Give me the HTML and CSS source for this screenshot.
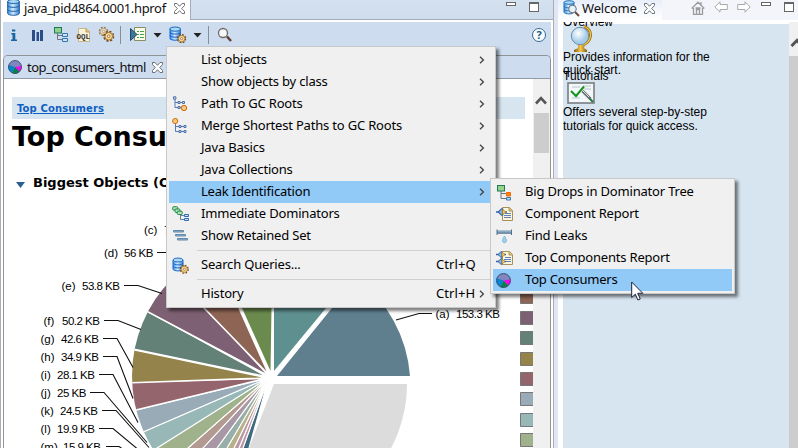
FILE: index.html
```html
<!DOCTYPE html>
<html lang="en">
<head>
<meta charset="utf-8">
<title>Memory Analyzer</title>
<link rel="stylesheet" href="styles.css">
</head>
<body>
<svg width="0" height="0" class="defs">
  <defs>
    <linearGradient id="dbg" x1="0" x2="1"><stop offset="0" stop-color="#3f8fd9"/><stop offset=".45" stop-color="#d0ecfc"/><stop offset="1" stop-color="#3b82cd"/></linearGradient>
    <linearGradient id="gold" x1="0" x2="1"><stop offset="0" stop-color="#8a5a14"/><stop offset=".5" stop-color="#f6c94c"/><stop offset="1" stop-color="#8a5a14"/></linearGradient>
    <radialGradient id="glass" cx=".4" cy=".35"><stop offset="0" stop-color="#fff"/><stop offset="1" stop-color="#a4cbe8"/></radialGradient>
    <symbol id="db" viewBox="0 0 13 17">
      <path d="M.7 2.5V14.200C.7 17 12.300 17 12.300 14.200V2.500Z" fill="url(#dbg)" stroke="#1d5ba5"/>
      <ellipse cx="6.500" cy="2.500" rx="5.800" ry="2" fill="#a9d7f6" stroke="#1d5ba5"/>
      <path d="M.7 6.500C.7 9 12.300 9 12.300 6.500M.7 10.500C.7 13 12.300 13 12.300 10.500" fill="none" stroke="#1d5ba5"/>
    </symbol>
    <symbol id="gear" viewBox="0 0 10 10">
      <circle cx="5" cy="5" r="4.200" fill="none" stroke="#7b4b14" stroke-width="1.300" stroke-dasharray="1.900 1.400"/>
      <circle cx="5" cy="5" r="3.300" fill="#fbdf9a" stroke="#9a6725" stroke-width=".8"/>
      <circle cx="5" cy="5" r="1.200" fill="#fff" stroke="#8a571b" stroke-width=".7"/>
    </symbol>
    <symbol id="dbgear" viewBox="0 0 17 17">
      <path d="M1 3V12C1 14.500 11 14.500 11 12V3Z" fill="url(#dbg)" stroke="#1c66d0"/>
      <ellipse cx="6" cy="3" rx="5" ry="2" fill="#a9d7f6" stroke="#2471bd"/>
      <path d="M1 6C1 8.500 11 8.500 11 6M1 9C1 11.500 11 11.500 11 9" fill="none" stroke="#1c66d0"/>
      <use href="#gear" x="7.500" y="7.500" width="9.500" height="9.500"/>
    </symbol>
    <symbol id="close" viewBox="0 0 11 11">
      <path d="M.5.5H3L5.500 3.300 8 .5H10.500V2.500L7.700 5.500 10.500 8.500V10.500H8L5.500 7.700 3 10.500H.5V8.500L3.300 5.500.5 2.500Z" fill="#fff" stroke="#606468" stroke-width=".9"/>
    </symbol>
    <symbol id="pieicon" viewBox="0 0 14 14">
      <circle cx="7" cy="7" r="6.500" fill="#8385c1"/>
      <path d="M7 7L13.500 6A6.500 6.500 0 0 1 11.500 11.700Z" fill="#f0e"/>
      <path d="M7 7L11.500 11.700A6.500 6.500 0 0 1 4 12.800Z" fill="#0a7f4a"/>
      <path d="M7 7L4 12.800A6.500 6.500 0 0 1 .8 5Z" fill="#0784d1"/>
      <circle cx="7" cy="7" r="6.500" fill="none" stroke="#35506e" stroke-width=".9"/>
    </symbol>
    <symbol id="domtree" viewBox="0 0 15 15">
      <path d="M4 6V12.500H9M4 8.500H9" fill="none" stroke="#6b747c"/>
      <rect x="1" y=".5" width="7" height="5.500" fill="#8fd090" stroke="#1f7a50"/>
    </symbol>
    <symbol id="page" viewBox="0 0 16 16">
      <path d="M5.500 1.500H12.500L15.500 4.500V14.500H5.500Z" fill="#fbf5dc" stroke="#a9905a"/>
      <path d="M12 1.500V5H15.500" fill="#e5cc86" stroke="#a9905a"/>
      <path d="M8 7.500H14M7 9.500H14M7 11.500H14" stroke="#5f83be"/>
    </symbol>
    <symbol id="plug" viewBox="0 0 10 7">
      <path d="M0 3.500H3M8 3.500H10" stroke="#3567a8" stroke-width="1.300"/>
      <path d="M2 3.500L5 .7H6V6.300H5Z" fill="#8cb2df" stroke="#3567a8"/>
      <path d="M6 1L9 3.500 6 6Z" fill="#f7d36b" stroke="#9c7423" stroke-width=".7"/>
    </symbol>
    <symbol id="chev" viewBox="0 0 6 8"><path d="M1 .8L4.400 4 1 7.200" fill="none" stroke="#444" stroke-width="1.300"/></symbol>
    <symbol id="arrow" viewBox="0 0 14 12"><path d="M.8 6L6 .8V3.500H13.300V8.500H6V11.200Z" fill="#fff" stroke="#a9a9a9"/></symbol>
  </defs>
</svg>

<div class="workbench">
  <section class="editor">
    <div class="tabs">
      <div class="tab">
        <svg class="tab-db" width="13" height="17"><use href="#db"/></svg>
        <span class="name file-name">java_pid4864.0001.hprof</span>
        <svg class="x" width="11" height="11"><use href="#close"/></svg>
      </div>
      <div class="window-buttons"><i class="min"></i><i class="max"></i></div>
    </div>
    <div class="editor-body">
      <div class="toolbar">
        <svg width="520" height="33" viewBox="3 22 520 33">
          <path d="M12 29.500h3.300v2H12zM11.300 33h4v6.500H17V41h-6v-1.500h1.500v-5h-1.200z" fill="#1765a3"/>
          <path d="M32 30h3v11h-3zM36.500 32h2.500v9h-2.500zM40 30h3v11h-3z" fill="#284f88"/>
          <use href="#domtree" x="53.500" y="27" width="15" height="15"/>
          <path d="M62.500 33.500h5v3h-5zM62.500 38.500h5v3h-5z" fill="#c9e4f6" stroke="#3975ad"/>
          <path d="M78.500 28.500h8l3 3v10h-11z" fill="#faf2d9" stroke="#c9b78c"/>
          <path d="M86 28.500v3.500h3.500" fill="#e7c870" stroke="#b89a56"/>
          <text x="76.500" y="39" class="oql" textLength="13.500" lengthAdjust="spacingAndGlyphs">OQL</text>
          <use href="#gear" x="98.500" y="26.500" width="10" height="10" opacity=".65"/>
          <use href="#gear" x="103" y="30.500" width="11.500" height="11.500"/>
          <path d="M120.500 26V44M208.500 26V44" stroke="#858e99"/>
          <path d="M134.500 27.500h11v13h-11z" fill="#f8fbe9" stroke="#8b8d60"/>
          <path d="M137 31.500h2M140 31.500h4M137 34.500h2M140 34.500h4M137 37.500h2M140 37.500h4" stroke="#49a04c"/>
          <path d="M130.500 28.500v12l6.500-6z" fill="#3c7795" stroke="#1b4c70"/>
          <path d="M153.500 33h8l-4 4.500zM193.500 33h8l-4 4.500z" fill="#222"/>
          <use href="#dbgear" x="169" y="26" width="17.500" height="17.500"/>
          <path d="M227 36.500l4 4.500" stroke="#5d3f33" stroke-width="2.500"/>
          <circle cx="223" cy="33" r="4.500" fill="#f3f8fb" stroke="#756b62" stroke-width="1.300"/>
        </svg>
        <span class="help">?</span>
      </div>
      <div class="query">
        <div class="query-tabs">
          <svg width="14" height="14"><use href="#pieicon"/></svg>
          <span class="name query-name">top_consumers_html</span>
          <svg class="x" width="11" height="11"><use href="#close"/></svg>
        </div>
        <div class="query-body">
          <div class="report">
            <div class="crumb"><a>Top Consumers</a></div>
            <h1>Top Consumers</h1>
            <h2><i class="twisty"></i>Biggest Objects (Overview)</h2>
            <svg class="chart" width="529" height="248" viewBox="4 200 529 248">
              <defs><clipPath id="disc"><circle cx="270" cy="376" r="138"/></clipPath></defs>
              <g clip-path="url(#disc)" stroke="#fff" stroke-width="1.100">
                <path d="M269 377L249 448 200 560 243 448Z" fill="#3f6a80"/>
                <path d="M268 378L243 448 200 520 239 448Z" fill="#bc98a4"/>
                <path d="M268 378L239 448 180 530 234 448Z" fill="#bc98a4"/>
                <path d="M268 378L234 448 180 530 227 448Z" fill="#b8b088"/>
                <path d="M268 378L227 448 150 560 217 448Z" fill="#98aea8"/>
                <path d="M268 378L217 448 150 530 203 448Z" fill="#a898a5"/>
                <path d="M268 378L203 448 140 500 188 448Z" fill="#b29a90"/>
                <path d="M268 378L188 448 120 500 157 448Z" fill="#a0b28b"/>
                <path d="M268 378L157 448 100 480 143 432Z" fill="#98b8b7"/>
                <path d="M268 378L143 432 80 450 136 410Z" fill="#98abb7"/>
              </g>
              <g clip-path="url(#disc)" stroke="#fff" stroke-width="1.600">
                <path d="M268 378L136 410 80 420 132 382Z" fill="#95656d"/>
                <path d="M268 378L80 384.500V339L135 350Z" fill="#94834b"/>
                <path d="M268 377L80 338V276L149 312Z" fill="#648177"/>
                <path d="M269 376L90 281 110 210 206 308Z" fill="#7d6073"/>
                <path d="M269 375L110 211 200 220 239 308Z" fill="#8e6555"/>
              </g>
              <path d="M270.500 371L242 308 224 268V248H271.500V308Z" fill="#6b8a4d"/>
              <path d="M274 371V248H360L326 308Z" fill="#5f9090"/>
              <path d="M277 376L332 308 356 277A137 137 0 0 1 410 376Z" fill="#5f7f8f"/>
              <circle cx="270" cy="378" r="5" fill="#fff"/>
              <path d="M274 384H407A136 136 0 0 1 374 473L230 490 249 448Z" fill="#dcdcdc"/>
              <path d="M124 285.500h14l24 8M104 320.500h14l23 9M103 338.500h14l16 29M103 356.500h14l16 42M99 374.500h14l25 48M90 392.500h14l43 50M102 410.500h14l33 37M99 428.500h14l24 20M106 446.500h13l6 4M157 252.500h14M396 320l23-6.500h13" fill="none" stroke="#111" stroke-width="1.100"/>
              <g class="labels">
                <text x="144" y="234">(c)</text><text class="val" x="164" y="234">79.1 KB</text>
                <text x="104" y="257">(d)</text><text class="val" x="124" y="257">56 KB</text>
                <text x="61.500" y="290">(e)</text><text class="val" x="82" y="290">53.8 KB</text>
                <text x="43.500" y="325">(f)</text><text class="val" x="62" y="325">50.2 KB</text>
                <text x="40.500" y="343">(g)</text><text class="val" x="61" y="343">42.6 KB</text>
                <text x="40.500" y="361">(h)</text><text class="val" x="61" y="361">34.9 KB</text>
                <text x="40.500" y="379">(i)</text><text class="val" x="57" y="379">28.1 KB</text>
                <text x="40.500" y="397">(j)</text><text class="val" x="57" y="397">25 KB</text>
                <text x="40.500" y="415">(k)</text><text class="val" x="60" y="415">24.5 KB</text>
                <text x="40.500" y="433">(l)</text><text class="val" x="57" y="433">19.9 KB</text>
                <text x="40.500" y="451">(m)</text><text class="val" x="63" y="451">15.9 KB</text>
                <text x="435.500" y="318">(a)</text><text class="val" x="456" y="318">153.3 KB</text>
              </g>
              <g stroke="#777" >
                <path d="M520.500 290.500h13v13h-13z" fill="#8e6555"/>
                <path d="M520.500 311.500h13v13h-13z" fill="#7d6073"/>
                <path d="M520.500 331.500h13v13h-13z" fill="#648177"/>
                <path d="M520.500 352.500h13v13h-13z" fill="#94834b"/>
                <path d="M520.500 372.500h13v13h-13z" fill="#95656d"/>
                <path d="M520.500 392.500h13v13h-13z" fill="#98abb7"/>
                <path d="M520.500 413.500h13v13h-13z" fill="#98b8b7"/>
                <path d="M520.500 433.500h13v13h-13z" fill="#a0b28b"/>
              </g>
            </svg>
          </div>
          <div class="scroll">
            <svg width="12" height="10" viewBox="0 0 12 10"><path d="M1 8.500L6 3.200 11 8.500" fill="none" stroke="#555" stroke-width="2.600"/></svg>
            <i class="thumb"></i>
          </div>
        </div>
      </div>
    </div>
  </section>

  <section class="welcome">
    <div class="wtabs">
      <div class="wtab">
        <svg width="17" height="17" viewBox="0 0 17 17">
          <path d="M1 2V12C1 14.500 11 14.500 11 12V2Z" fill="url(#dbg)" stroke="#2471bd"/>
          <ellipse cx="6" cy="2.500" rx="5" ry="1.800" fill="#a9d7f6" stroke="#2471bd"/>
          <path d="M1 6C1 8.500 11 8.500 11 6M1 9C1 11.500 11 11.500 11 9" fill="none" stroke="#2471bd"/>
          <path d="M12 12l4 4" stroke="#6d4a3a" stroke-width="2"/>
          <circle cx="9.500" cy="9" r="3.800" fill="#e3f2fb" stroke="#6e7074"/>
        </svg>
        <span class="name welcome-name">Welcome</span>
        <svg class="x" width="11" height="11"><use href="#close"/></svg>
      </div>
      <div class="wtools">
        <svg width="14" height="14" viewBox="0 0 14 14"><path d="M2.500 7V13.500H11.500V7M.7 7.500L7 1.200 13.300 7.500M10 1v3M5.500 13.500V8.500h3v5M4.500 7h5" fill="none" stroke="#9c9c9c" stroke-width="1.300"/></svg>
        <svg width="14" height="12"><use href="#arrow"/></svg>
        <svg class="fwd" width="14" height="12"><use href="#arrow"/></svg>
      </div>
      <div class="window-buttons"><i class="min"></i><i class="max"></i></div>
    </div>
    <div class="wbody">
      <div class="intro">
        <p class="overview">Overview</p>
        <svg class="globe" width="22" height="28" viewBox="0 0 22 28">
          <path d="M14 1.500C24 5 22 18 11 20.500" fill="none" stroke="#9a6a10" stroke-width="3"/>
          <path d="M14 1.500C24 5 22 18 11 20.500" fill="none" stroke="#f1c33f" stroke-width="1.300"/>
          <path d="M8 20h7l-1 3 3 2v2H4v-2l4-2z" fill="url(#gold)"/>
          <circle cx="10" cy="11" r="8.700" fill="url(#glass)" stroke="#6f8ea8"/>
        </svg>
        <p class="provides">Provides information for the<br>quick start.</p>
        <p class="tutorials">Tutorials</p>
        <svg class="board" width="28" height="22" viewBox="0 0 28 22">
          <rect x="1" y="1" width="26" height="20" fill="#f2f7fa" stroke="#7f8488" stroke-width="1.700"/>
          <path d="M5 5h8M16 4h8M17 7h7M5 16h8M7 14h4" stroke="#b9c4cd"/>
          <path d="M4 9l5 5 8-9.500" fill="none" stroke="#13931b" stroke-width="2"/>
          <path d="M15.500 9l8 8" stroke="#656d73" stroke-width="3"/><path d="M16 9l6 6" stroke="#dbe2e5"/><path d="M23 17l3 3" stroke="#187e31" stroke-width="2"/>
        </svg>
        <p class="offers">Offers several step-by-step<br>tutorials for quick access.</p>
      </div>
      <div class="wscroll"><svg width="9" height="11" viewBox="0 0 9 11"><path d="M2.500 10L8 4.500 13 10" fill="none" stroke="#555" stroke-width="3"/></svg></div>
    </div>
  </section>
</div>

<ul class="menu main-menu">
  <li><b></b><span>List objects</span><svg width="6" height="8"><use href="#chev"/></svg></li>
  <li><b></b><span>Show objects by class</span><svg width="6" height="8"><use href="#chev"/></svg></li>
  <li><b><svg width="16" height="16" viewBox="0 0 16 16"><path d="M3 3V11.500H13M3 6.500H11" fill="none" stroke="#5579b5"/><path d="M1.500.8h2.400v2.400H1.500zM6 5.500h2v2H6zM10.500 5.500h2v2h-2zM6 10.500h2v2H6z" fill="#d6e5f5" stroke="#4d70ac"/><circle cx="12" cy="12" r="2.700" fill="#ffc57b" stroke="#c67213"/></svg></b><span>Path To GC Roots</span><svg width="6" height="8"><use href="#chev"/></svg></li>
  <li><b><svg width="16" height="16" viewBox="0 0 16 16"><path d="M3.500 5V13.500H13M3.500 8.500H13" fill="none" stroke="#5579b5"/><path d="M7 7.500h2v2H7zM12 7.500h2v2h-2zM7 12.500h2v2H7zM12 12.500h2v2h-2z" fill="#d6e5f5" stroke="#4d70ac"/><circle cx="3.200" cy="3" r="2.600" fill="#ffc57b" stroke="#c67213"/></svg></b><span>Merge Shortest Paths to GC Roots</span><svg width="6" height="8"><use href="#chev"/></svg></li>
  <li><b></b><span>Java Basics</span><svg width="6" height="8"><use href="#chev"/></svg></li>
  <li><b></b><span>Java Collections</span><svg width="6" height="8"><use href="#chev"/></svg></li>
  <li class="on"><b></b><span>Leak Identification</span><svg width="6" height="8"><use href="#chev"/></svg></li>
  <li><b><svg width="17" height="16" viewBox="0 0 17 16"><path d="M8.500 8V13.500H12M8.500 9.500H12" fill="none" stroke="#6882a0"/><g fill="#b0e2b4" stroke="#23894e"><rect x=".7" y=".7" width="5" height="3.500" rx="1"/><rect x="3" y="3" width="5" height="3.500" rx="1"/><rect x="5.300" y="5.200" width="5" height="3.300" rx="1"/></g><path d="M12.500 8.500h4v2h-4zM12.500 12.500h4v2h-4z" fill="#cfe6f8" stroke="#2f6ab2"/></svg></b><span>Immediate Dominators</span></li>
  <li><b><svg width="16" height="16" viewBox="0 0 16 16"><path d="M1.500 2.500h10v1.500h-10zM3.500 6.500h10V8h-10zM5.500 10.500h10V12h-10z" fill="#90b8d8" stroke="#6388aa"/></svg></b><span>Show Retained Set</span></li>
  <li class="sep"></li>
  <li><b><svg width="17" height="17"><use href="#dbgear"/></svg></b><span>Search Queries...</span><kbd>Ctrl+Q</kbd></li>
  <li class="sep"></li>
  <li><b></b><span>History</span><kbd>Ctrl+H</kbd><svg width="6" height="8"><use href="#chev"/></svg></li>
</ul>

<ul class="menu sub-menu">
  <li><b><svg width="16" height="17" viewBox="0 0 16 17"><path d="M5 7V14.500H10M5 9.500H10" fill="none" stroke="#6b747c"/><rect x="1.500" y="1.500" width="7" height="5.500" fill="#96d28f" stroke="#1f7a50"/><path d="M10.500 8.500h4v3.500h-4z" fill="#ff850b" stroke="#f36c00"/><path d="M10.500 13.500h4v2.500h-4z" fill="#b9dcf3" stroke="#3c78b0"/></svg></b><span>Big Drops in Dominator Tree</span></li>
  <li><b><svg width="17" height="16"><use href="#page" x="1" width="16" height="16"/><use href="#plug" y="2" width="11" height="8"/></svg></b><span>Component Report</span></li>
  <li><b><svg width="17" height="16" viewBox="0 0 17 16"><path d="M1 2.500h15v3.500H1z" fill="#7792ab"/><path d="M1 1.500v5.500M15.500 1.500v5.500" stroke="#4e708e"/><path d="M2 3.500h13" stroke="#8fabc2"/><path d="M8.500 8C6 12 5.800 14.500 8.500 14.800 11.200 14.500 11 12 8.500 8Z" fill="#9bd0ef" stroke="#6eaed8" stroke-width=".8"/></svg></b><span>Find Leaks</span></li>
  <li><b><svg width="17" height="16"><use href="#page" x="1" width="16" height="16"/><use href="#plug" y="1" width="10" height="7"/><use href="#plug" y="8" width="10" height="7"/></svg></b><span>Top Components Report</span></li>
  <li class="on"><b><svg width="15" height="15"><use href="#pieicon"/></svg></b><span>Top Consumers</span></li>
</ul>
<svg class="cursor" width="13" height="20" viewBox="0 0 13 20"><path d="M.7 1V16.500L4.300 13.200 6.900 19 9.300 18 6.700 12.300H11.800Z" fill="#fff" stroke="#1a1f3a"/></svg>
</body>
</html>
```
FILE: styles.css
```css
* { box-sizing: border-box; }
body {
  margin: 0;
  width: 798px;
  height: 448px;
  overflow: hidden;
  background: #fff;
  font: 13px/16px "Noto Sans", sans-serif;
  color: #111;
}
svg { display: block; flex: none; }
.defs { position: absolute; }
i { display: block; }
.workbench { display: grid; grid-template-columns: 558px 240px; height: 448px; background: #e0e6f5; }

.editor { width: 554px; height: 448px; border: solid #aaacb2; border-width: 0 1px; background: #fff; }
.tabs { display: flex; height: 20px; background: linear-gradient(#d5e1ef, #cddcec); }
.tab { display: flex; width: 190px; padding-left: 6px; background: #fff; border-right: 1px solid #a3adba; }
.tab-db { margin-top: -1px; }
.name { white-space: nowrap; }
.file-name { margin-left: 4px; width: 150px; letter-spacing: -.34px; }
.x { margin-top: 3px; }
.tabs .window-buttons { border-bottom: 1px solid #a3adba; flex: 1; padding-right: 14px; }
.window-buttons { display: flex; justify-content: flex-end; gap: 13px; padding-top: 2px; }
.min { width: 10px; height: 4px; border: 1px solid #666; background: #fff; }
.max { width: 10px; height: 10px; border: 1px solid #666; border-top-width: 2px; background: #fff; }

.editor-body { margin: 2px 2px 0; height: 426px; background: #cddcee; }
.toolbar { display: flex; justify-content: space-between; height: 33px; padding-right: 5px; }
.oql { font: bold 8px "Liberation Mono", monospace; fill: #333; }
.help { width: 14px; height: 14px; margin-top: 6px; border: 1.5px solid #376992; border-radius: 50%; background: #f8fcff; color: #24598a; font: bold 11px/11px "Noto Sans", sans-serif; text-align: center; }
.query { height: 393px; border: solid #8f9499; border-width: 1px 1px 0; border-radius: 5px 5px 0 0; overflow: hidden; }
.query-tabs { display: flex; height: 23px; padding: 4px 0 0 4px; border-bottom: 1px solid #929ba5; background: #cddcee; }
.query-name { margin-left: 5px; width: 125px; line-height: 15px; letter-spacing: -.5px; }
.query-tabs .x { margin-top: 2px; }
.query-body { display: flex; height: 370px; background: #fff; }
.report { flex: 1; overflow: hidden; font-family: "DejaVu Sans", sans-serif; color: #000; }
.crumb { width: 513px; height: 22px; margin: 18px 0 0 8px; padding-left: 5px; background: #d7e5f0; font-weight: bold; font-size: 10px; line-height: 23px; letter-spacing: .12px; }
.crumb a { color: #0f60c4; text-decoration: underline; }
h1 { margin: 0 0 0 8px; height: 56px; font-size: 27px; line-height: 35px; white-space: nowrap; }
h2 { display: flex; margin: 0 0 0 12px; height: 25px; font-size: 13px; line-height: 16px; white-space: nowrap; }
.twisty { width: 9px; height: 6px; margin: 7px 8px 0 0; background: #2a5f91; clip-path: polygon(0 0, 100% 0, 50% 100%); }
.labels { font: 11.5px "Liberation Sans", sans-serif; fill: #000; }
.val { letter-spacing: -.5px; }
.scroll { width: 17px; padding-top: 16px; background: #f0f0f0; }
.scroll svg { margin-left: 2px; }
.thumb { width: 15px; height: 40px; margin: 8px 0 0 1px; background: #cdcdcd; }

.welcome { height: 448px; background: #fff; }
.wtabs { display: flex; height: 20px; background: #f3f5fb; }
.wtab { display: flex; width: 104px; padding-left: 5px; background: linear-gradient(#e8effa, #fff); }
.wtab .name { width: 62px; margin-left: 2px; letter-spacing: -.2px; }
.wtools { display: flex; gap: 9px; width: 70px; margin-left: 29px; }
.wtools svg { margin-top: 1px; }
.wtools .fwd { transform: scaleX(-1); }
.wbody { display: flex; height: 428px; margin-left: 5px; padding-top: 2px; background: linear-gradient(#fff 4px, #d7e5f0 4px); }
.intro { width: 226px; height: 426px; overflow: hidden; font: 12px/14px "Liberation Sans", sans-serif; color: #000; }
.intro p { margin: 0; white-space: nowrap; }
.intro .overview { height: 3px; line-height: 0; }
.globe { margin-left: 7px; }
.intro .provides { margin-top: -2px; line-height: 13px; }
.intro .tutorials { margin-top: -8px; }
.board { margin: -1px 0 0 4px; }
.intro .offers { margin-top: 1px; }
.wscroll { width: 9px; padding-top: 14px; background: linear-gradient(#f0f0f0 34px, #cdcdcd 34px); }

.menu { position: absolute; margin: 0; padding: 2px; list-style: none; background: #f0f0f0; border: 1px solid #c8c8c8; box-shadow: 3px 3px 3px rgba(0,0,0,.5); letter-spacing: -.19px; }
.menu li { display: flex; align-items: center; height: 22px; white-space: nowrap; color: #000; }
.menu b { width: 32px; flex: none; padding-left: 3px; }
.menu span { flex: 1; padding-bottom: 2px; }
.menu .on { background: #91c9f7; }
.menu .sep { height: 7px; padding-left: 28px; }
.menu .sep::before { content: ""; flex: 1; height: 1px; background: #d0d0d0; }
.main-menu { left: 166px; top: 46px; width: 330px; height: 262px; }
.main-menu li { padding-right: 8px; }
.main-menu .sep { padding-right: 2px; }
.sub-menu { left: 490px; top: 178px; width: 245px; height: 116px; }
kbd { width: 43px; padding-bottom: 2px; font: inherit; letter-spacing: .1px; }
kbd:last-child { margin-right: 6px; }
.cursor { position: absolute; left: 631px; top: 281px; }
```
